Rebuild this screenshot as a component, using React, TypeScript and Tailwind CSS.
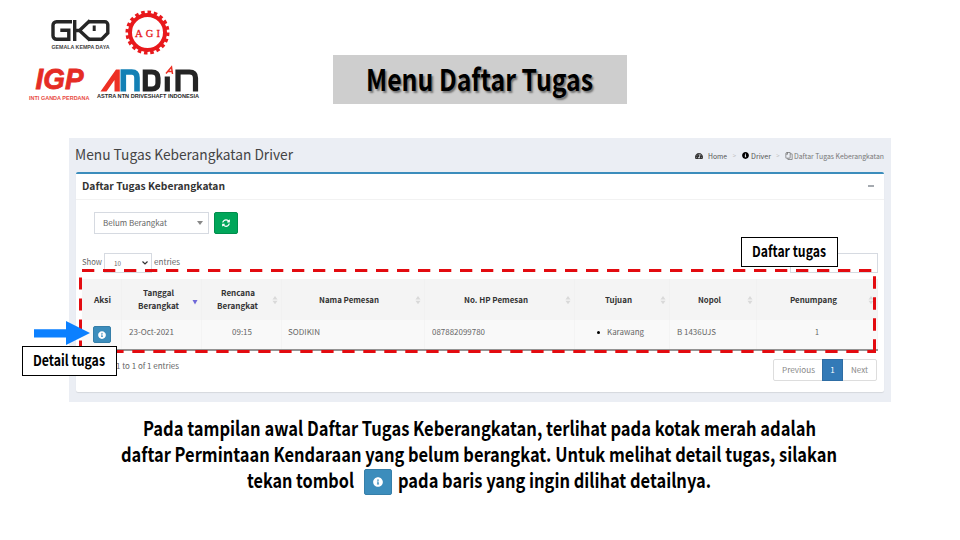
import { useLayoutEffect, useRef, type ReactNode } from "react";
import { FaInfoCircle, FaRegCopy, FaTachometerAlt, FaSyncAlt } from "react-icons/fa";

/* One line of text, condensed or widened to a set width. */
function Fit({ w, className = "", children }: { w: number; className?: string; children: ReactNode }) {
  const ref = useRef<HTMLSpanElement>(null);
  useLayoutEffect(() => {
    const el = ref.current;
    if (el && el.offsetWidth) {
      el.style.transform = "none";
      el.style.transform = `scaleX(${w / el.getBoundingClientRect().width})`;
    }
  }, [w]);
  return (
    <span className={`block shrink-0 text-left ${className}`} style={{ width: w }}>
      <span ref={ref} className="inline-block origin-left whitespace-nowrap align-top">
        {children}
      </span>
    </span>
  );
}

function Logos() {
  return (
    <svg className="block h-[104px] w-[210px]" viewBox="0 0 210 104">
      <g fill="none" stroke="#262626" strokeWidth="3.4">
        <path d="M72 21.700H56.500a3.500 3.500 0 0 0-3.500 3.500v10.500a3.500 3.500 0 0 0 3.500 3.500h12.300v-9h-8.500" />
        <path d="M74.700 20v21M90 20.500L79.500 30.500L90 40.300M75 30.500h5" />
        <path d="M88.500 21.700h16.300a3 3 0 0 1 3 3v8.300l-6.200 6.200H89" />
        <path d="M94.200 25.500v5.500" strokeWidth="3" />
      </g>
      <text x="51.500" y="49.300" textLength="58" lengthAdjust="spacingAndGlyphs" fontFamily="Liberation Sans, sans-serif" fontWeight="700" fontSize="4.600" fill="#444">GEMALA KEMPA DAYA</text>
      <circle cx="147.500" cy="32.500" r="17.500" fill="none" stroke="#e8191c" strokeWidth="4" />
      <circle cx="147.500" cy="32.500" r="20" fill="none" stroke="#e8191c" strokeWidth="4" pathLength="100" strokeDasharray="2.800 2.200" />
      <text x="135" y="36.500" textLength="25" lengthAdjust="spacing" fontFamily="Liberation Serif, serif" fontSize="10.500" fill="#e8191c" stroke="#e8191c" strokeWidth=".3">AGI</text>
      <text x="35.500" y="89" textLength="48" lengthAdjust="spacingAndGlyphs" fontFamily="Liberation Sans, sans-serif" fontStyle="italic" fontWeight="700" fontSize="30" fill="#e52c25" stroke="#e52c25" strokeWidth=".8">IGP</text>
      <text x="29" y="99.500" textLength="60.500" lengthAdjust="spacingAndGlyphs" fontFamily="Liberation Sans, sans-serif" fontWeight="700" fontSize="5.600" fill="#e84a43">INTI GANDA PERDANA</text>
      <path d="M100.500 91.500L116 69.500H119.800V91.500h-5.300V80L106.500 91.500z" fill="#ed3024" />
      <path d="M123.300 91.500V72h8.500q5.200 0 5.200 5.700v13.800" fill="none" stroke="#1380b5" strokeWidth="5.600" />
      <g fill="none" stroke="#242424" strokeWidth="5.200">
        <path d="M145.300 72h6.500q6.200 0 6.200 6v5q0 6-6.200 6h-6.500z" />
        <path d="M167.300 76.500v15M178 91.500V72h11.500q6 0 6 6v13.500" />
      </g>
      <path d="M166 73.500L171.500 67L172.500 74M168 71.500h4" fill="none" stroke="#ed3024" strokeWidth="1.500" />
      <text x="97" y="98.200" textLength="102" lengthAdjust="spacingAndGlyphs" fontFamily="Liberation Sans, sans-serif" fontWeight="700" fontSize="5.200" fill="#282828">ASTRA NTN DRIVESHAFT INDONESIA</text>
    </svg>
  );
}

function Sort({ active = false }: { active?: boolean }) {
  return (
    <svg className="h-[10px] w-[6px] shrink-0" viewBox="0 0 6 10">
      {active ? <path d="M.5 5h5L3 9.500z" fill="#6f68d8" /> : <path d="M.5 4.500h5L3 1zM.5 5.800h5L3 9.300z" fill="#d9d9d9" />}
    </svg>
  );
}

function Head({ col, pad, sort, children }: { col: string; pad: string; sort?: "on" | "off"; children: ReactNode }) {
  return (
    <div className={`flex h-[41px] shrink-0 items-center border-r border-[#f1f1f1] pb-px font-bold text-[#333] ${col} ${pad}`}>
      <div className="leading-[13px]">{children}</div>
      {sort && <span className="ml-auto flex pr-[3px] pt-px"><Sort active={sort === "on"} /></span>}
    </div>
  );
}

function Cell({ col, pad, children }: { col: string; pad: string; children: ReactNode }) {
  return <div className={`flex h-[29px] shrink-0 items-center border-r border-[#f4f4f4] pb-[5px] ${col} ${pad}`}>{children}</div>;
}

function DashedFrame() {
  return (
    <svg className="absolute left-0 top-0 h-[540px] w-[960px]" viewBox="0 0 960 540">
      <g stroke="#e30b10" strokeWidth="3" fill="none">
        <path d="M82 270.500H872" strokeDasharray="12.300 8.700" />
        <path d="M874.500 276.300V352" strokeDasharray="12.500 8.500" />
        <path d="M111.300 351.500H876" strokeDasharray="12.300 8.700" />
        <path d="M80.500 277.500V350" strokeDasharray="12 9" />
      </g>
      <path d="M34 329.200H66V321L90 333L66 345V337.500H34z" fill="#0b80ff" />
    </svg>
  );
}

export default function App() {
  return (
    <main className="relative h-[540px] w-[960px] overflow-hidden bg-white font-['Noto_Sans_CJK_SC','Noto_Sans',sans-serif] text-[8px] leading-[12px] text-[#666]">
      <header className="flex h-[138px] items-start">
        <Logos />
        <h1 className="ml-[123px] mt-[55px] flex h-[49px] w-[294px] items-start justify-center bg-[#cecece] pr-px text-[30px] font-bold leading-[47px] text-black [text-shadow:2px_2px_2px_#00000070]">
          <Fit w={227}>Menu Daftar Tugas</Fit>
        </h1>
      </header>

      <section className="ml-[69px] h-[264px] w-[822px] bg-[#ebeef4] px-[7px]">
        <div className="flex h-[34px] items-center justify-between">
          <Fit w={218} className="-ml-px pb-[2px] text-[14px] leading-[30px] text-[#444]">Menu Tugas Keberangkatan Driver</Fit>
          <nav className="flex items-center pt-px text-[7px] text-[#555]">
            <FaTachometerAlt className="mr-[5px] size-[8px] text-[#333]" />
            <Fit w={19}>Home</Fit>
            <span className="w-[15px] text-center text-[6px] text-[#bbb]">&gt;</span>
            <FaInfoCircle className="mr-[2px] size-[7px] text-black" />
            <Fit w={20}>Driver</Fit>
            <span className="w-[14px] text-center text-[6px] text-[#bbb]">&gt;</span>
            <FaRegCopy className="mr-px size-[8px] -scale-x-100 text-[#777]" />
            <Fit w={90} className="text-[#777]">Daftar Tugas Keberangkatan</Fit>
          </nav>
        </div>

        <div className="h-[220px] w-[808px] rounded-[2px] border-t-2 border-[#3c8dbc] bg-white shadow-[0_1px_1px_#00000018]">
          <div className="flex h-[26px] items-center justify-between border-b border-[#f2f2f2] px-[6px]">
            <Fit w={143} className="pb-[2px] text-[10px] leading-[22px] font-bold text-[#333]">Daftar Tugas Keberangkatan</Fit>
            <span className="mb-px mr-[4px] h-[2px] w-[6px] bg-[#a5aab0]" />
          </div>

          <div className="flex px-[18px] pt-[12px]">
            <div className="flex h-[22px] w-[115px] items-center justify-between border border-[#d6dae1] pl-[8px] pr-[5px]">
              <Fit w={64}>Belum Berangkat</Fit>
              <span className="border-x-[3px] border-t-[4px] border-x-transparent border-t-[#888]" />
            </div>
            <button className="ml-[5px] flex h-[22px] w-[24px] items-center justify-center rounded-[2px] border border-[#008d4c] bg-[#00a65a] text-white">
              <FaSyncAlt className="size-[8px]" />
            </button>
          </div>

          <div className="mt-[19px] flex h-[20px] items-center px-[6px]">
            <Fit w={20} className="pb-[2px]">Show</Fit>
            <div className="ml-[2px] flex h-[20px] w-[48px] items-center justify-between border border-[#d6dae1] pl-[9px] pr-[3px]">
              <Fit w={7} className="text-[7px]">10</Fit>
              <svg className="h-[4px] w-[6px]" viewBox="0 0 6 4"><path d="M.5.5L3 3L5.500.5" fill="none" stroke="#333" strokeWidth="1.200" /></svg>
            </div>
            <Fit w={26} className="ml-[2px] pb-[2px]">entries</Fit>
            <span className="ml-auto h-[20px] w-[88px] border border-[#d6dae1]" />
          </div>

          <div className="ml-[6px] mt-[6px] w-[796px] border-b-2 border-[#949494]">
            <div className="flex bg-[#f4f4f4]">
              <Head col="w-[40px]" pad="pl-[12px]"><Fit w={17}>Aksi</Fit></Head>
              <Head col="w-[80px]" pad="pl-[16px]" sort="on">
                <Fit w={31} className="ml-[5px]">Tanggal</Fit><Fit w={41}>Berangkat</Fit>
              </Head>
              <Head col="w-[80px]" pad="pl-[15px]" sort="off">
                <Fit w={34} className="ml-[4px]">Rencana</Fit><Fit w={41}>Berangkat</Fit>
              </Head>
              <Head col="w-[143px]" pad="pl-[37px]" sort="off"><Fit w={60}>Nama Pemesan</Fit></Head>
              <Head col="w-[150px]" pad="pl-[39px]" sort="off"><Fit w={64}>No. HP Pemesan</Fit></Head>
              <Head col="w-[95px]" pad="pl-[30px]" sort="off"><Fit w={27}>Tujuan</Fit></Head>
              <Head col="w-[87px]" pad="pl-[28px]" sort="off"><Fit w={23}>Nopol</Fit></Head>
              <Head col="w-[121px]" pad="pl-[33px]" sort="off"><Fit w={47}>Penumpang</Fit></Head>
            </div>
            <div className="flex bg-[#f9f9f9]">
              <div className="flex h-[29px] w-[40px] shrink-0 border-r border-[#f4f4f4] pl-[11px] pt-[6px]">
                <span className="flex h-[17px] w-[18px] items-center justify-center rounded-[2px] border border-[#367fa9] bg-[#3c8dbc] text-white"><FaInfoCircle className="size-[8px]" /></span>
              </div>
              <Cell col="w-[80px]" pad="pl-[7px]"><Fit w={45}>23-Oct-2021</Fit></Cell>
              <Cell col="w-[80px]" pad="pl-[30px]"><Fit w={20}>09:15</Fit></Cell>
              <Cell col="w-[143px]" pad="pl-[6px]"><Fit w={32}>SODIKIN</Fit></Cell>
              <Cell col="w-[150px]" pad="pl-[7px]"><Fit w={53}>087882099780</Fit></Cell>
              <Cell col="w-[95px]" pad="pl-[22px]"><span className="mr-[7px] size-[3px] rounded-full bg-black" /><Fit w={37}>Karawang</Fit></Cell>
              <Cell col="w-[87px]" pad="pl-[7px]"><Fit w={39}>B 1436UJS</Fit></Cell>
              <Cell col="w-[121px]" pad="pl-[58px]"><Fit w={4}>1</Fit></Cell>
            </div>
          </div>

          <div className="flex justify-between pl-[40px] pr-[7px] pt-[8px]">
            <Fit w={63} className="pt-px">1 to 1 of 1 entries</Fit>
            <div className="flex h-[22px] w-[104px] items-center rounded-[2px] border border-[#ddd] text-[#888]">
              <Fit w={33} className="ml-[8px]">Previous</Fit>
              <span className="-my-px ml-[7px] flex h-[22px] w-[21px] items-center justify-center border border-[#2e6da4] bg-[#337ab7] text-white">1</span>
              <Fit w={17} className="ml-[8px]">Next</Fit>
            </div>
          </div>
        </div>
      </section>

      <section className="flex flex-col items-center pr-[2px] pt-[13px] text-[20px] font-bold leading-[26px] text-black">
        <div className="flex h-[26px]"><Fit w={673}>Pada tampilan awal Daftar Tugas Keberangkatan, terlihat pada kotak merah adalah</Fit></div>
        <div className="flex h-[26px]"><Fit w={716}>daftar Permintaan Kendaraan yang belum berangkat. Untuk melihat detail tugas, silakan</Fit></div>
        <div className="flex h-[28px] items-start">
          <Fit w={107}>tekan tombol</Fit>
          <span className="ml-[10px] mr-[6px] mt-[2px] flex h-[26px] w-[28px] items-center justify-center rounded-[2px] border border-[#367fa9] bg-[#3c8dbc] text-white"><FaInfoCircle className="size-[10px]" /></span>
          <Fit w={313}>pada baris yang ingin dilihat detailnya.</Fit>
        </div>
      </section>

      <DashedFrame />
      <div className="absolute left-[741px] top-[237px] flex h-[30px] w-[97px] items-start justify-center border border-black bg-white pr-[2px] text-[15px] font-bold leading-[26px] text-black">
        <Fit w={74}>Daftar tugas</Fit>
      </div>
      <div className="absolute left-[22px] top-[346px] flex h-[30px] w-[95px] items-start justify-center border border-black bg-white pr-[2px] text-[15px] font-bold leading-[26px] text-black">
        <Fit w={72}>Detail tugas</Fit>
      </div>
    </main>
  );
}
